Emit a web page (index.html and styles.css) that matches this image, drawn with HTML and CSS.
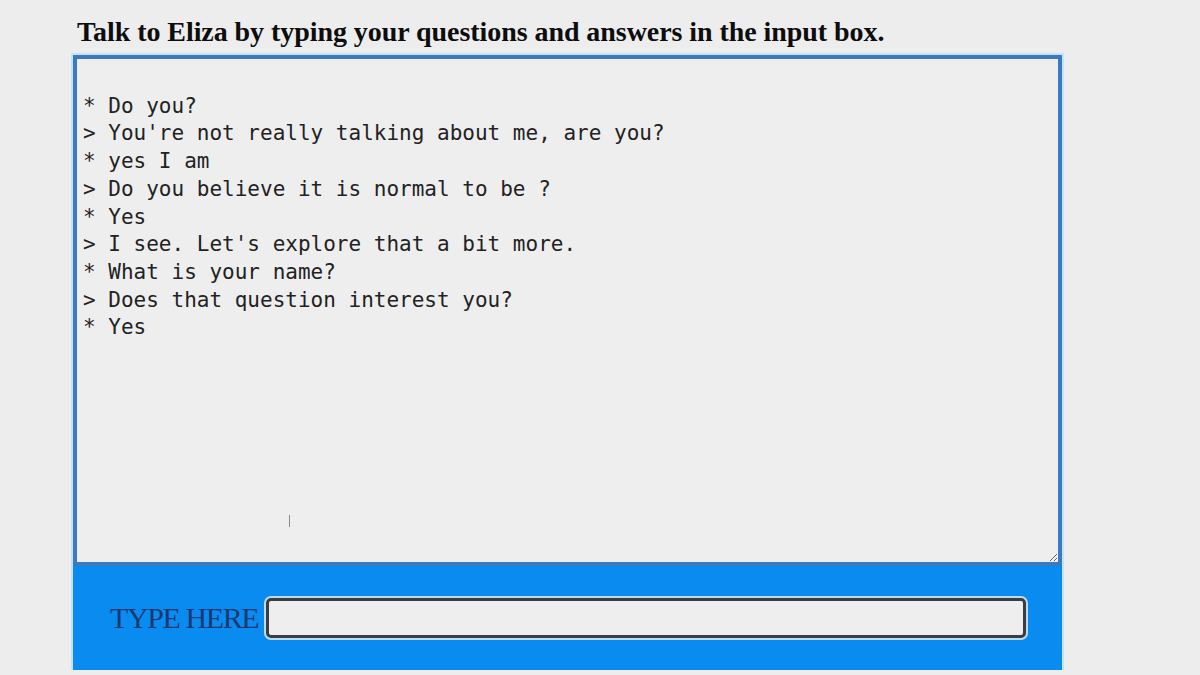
FILE: index.html
```html
<!DOCTYPE html>
<html>
<head>
<meta charset="utf-8">
<link rel="stylesheet" href="styles.css">
</head>
<body>
<div class="page">
  <h1 class="title">Talk to Eliza by typing your questions and answers in the input box.</h1>
  <div class="chat">
    <textarea class="log" readonly>

* Do you?
> You're not really talking about me, are you?
* yes I am
> Do you believe it is normal to be ?
* Yes
> I see. Let's explore that a bit more.
* What is your name?
> Does that question interest you?
* Yes</textarea>
    <span class="cursor"></span>
    <div class="panel">
      <label class="label" for="q">TYPE HERE</label>
      <input class="entry" id="q" type="text">
    </div>
  </div>
</div>
</body>
</html>
```
FILE: styles.css
```css
html, body {
  margin: 0;
  padding: 0;
  background: #ededed;
}
.page {
  padding: 16px 0 0 73px;
}
.title {
  margin: 0 0 7px 4px;
  font-family: "Liberation Serif", "Times New Roman", serif;
  font-weight: bold;
  font-size: 28px;
  letter-spacing: -0.06px;
  line-height: 32px;
  color: #0d0d0d;
}
.chat {
  position: relative;
  width: 989px;
  box-shadow: 0 0 0 2px #c4e2fb;
}
.log {
  display: block;
  box-sizing: border-box;
  width: 989px;
  height: 511px;
  margin: 0;
  padding: 6px 6px 4px;
  border: 4px solid #3c7ac0;
  background: #eeeeee;
  color: #222222;
  font-family: "DejaVu Sans Mono", monospace;
  font-size: 21px;
  line-height: 27.7px;
  resize: both;
  outline: none;
  overflow: hidden;
}
.cursor {
  position: absolute;
  left: 216px;
  top: 460px;
  width: 1px;
  height: 12px;
  background: #8a8a8a;
}
.panel {
  display: flex;
  align-items: center;
  height: 104px;
  padding-left: 37px;
  background: #0a8bf0;
}
.label {
  font-family: "Liberation Serif", "Times New Roman", serif;
  font-size: 30px;
  letter-spacing: -1.4px;
  color: #1a3870;
}
.entry {
  box-sizing: border-box;
  width: 760px;
  height: 40px;
  margin-left: 8px;
  border: 3px solid #3b3d40;
  border-radius: 5px;
  background: #eeeeee;
  box-shadow: 0 0 0 2px #bcdcf6;
  outline: none;
}
```
